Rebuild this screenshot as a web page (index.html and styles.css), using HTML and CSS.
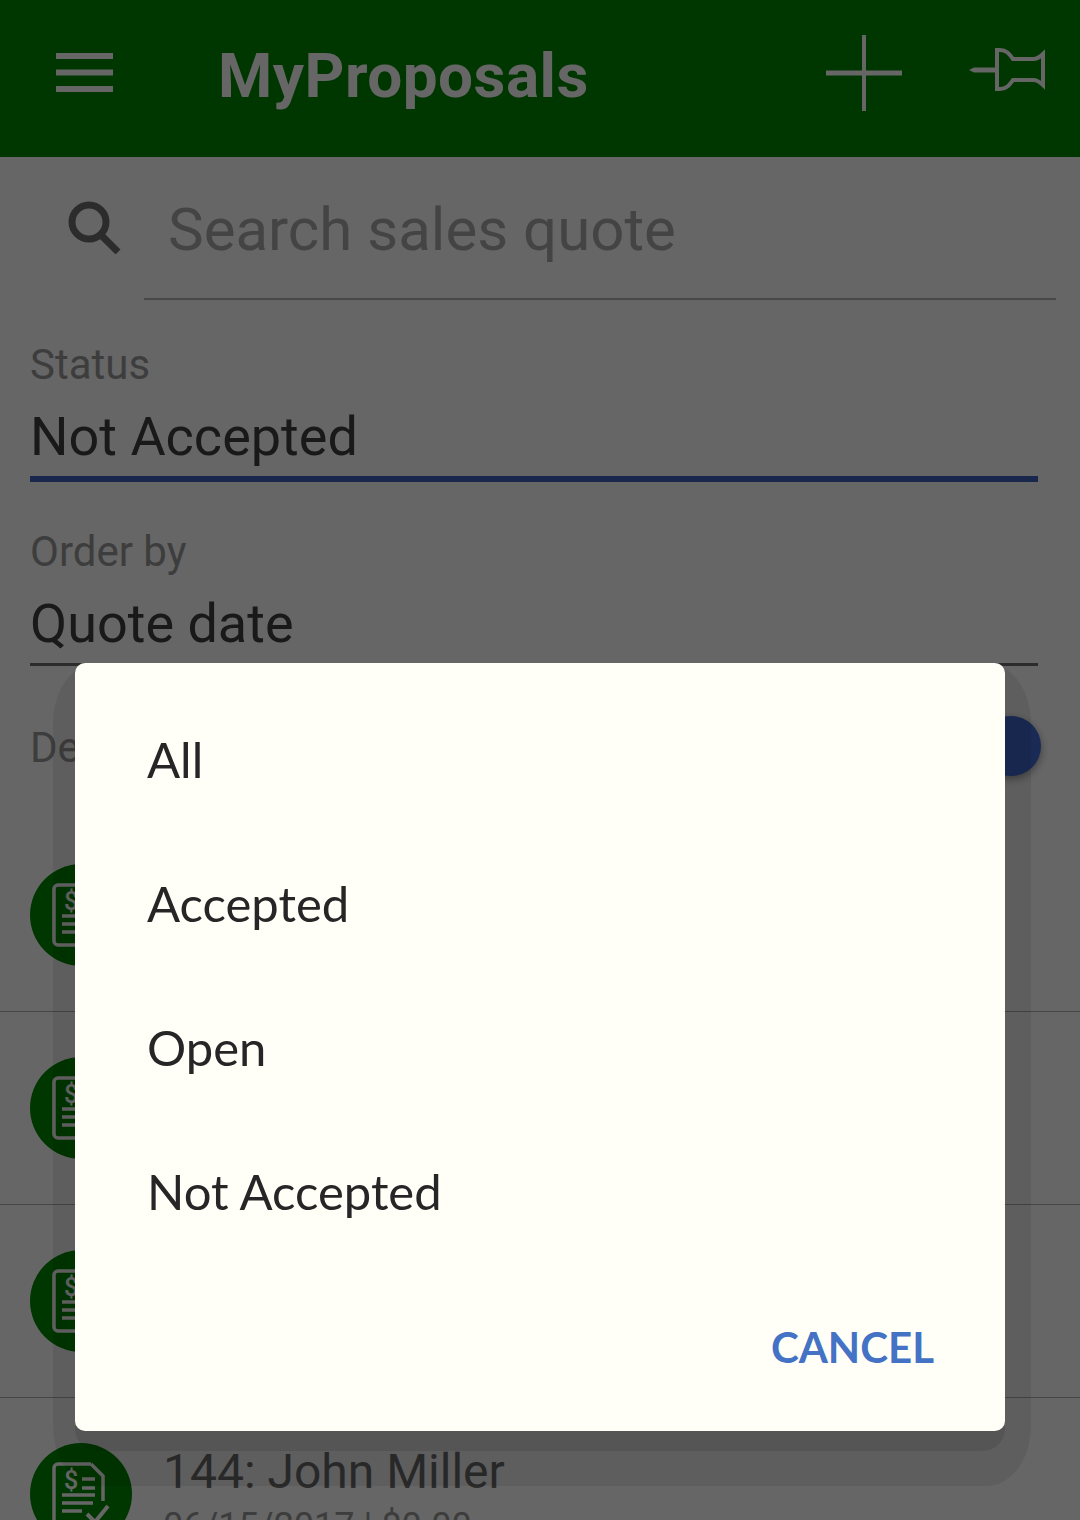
FILE: index.html
```html
<!DOCTYPE html>
<html lang="en">
<head>
    <meta charset="UTF-8">
    <meta name="viewport" content="width=device-width, initial-scale=1.0">
    <title>MyProposals</title>
    <link rel="stylesheet" href="styles.css">
</head>
<body>
    <header class="toolbar">
        <svg class="menu-icon" width="57" height="39" viewBox="0 0 57 39">
            <path d="M0 3h57M0 19.500h57M0 36h57"/>
        </svg>
        <h1 class="app-title">MyProposals</h1>
        <svg class="add-icon" width="76" height="76" viewBox="0 0 76 76">
            <path class="add-v" d="M38 0v76"/>
            <path class="add-h" d="M0 38h76"/>
        </svg>
        <svg class="pin-icon" width="78" height="46" viewBox="0 0 78 46">
            <path class="pin-head" d="M29 3h3c7 0 10 5 13 9h20c4 0 7-2 10-5v31c-3-3-6-5-10-5H45c-3 4-6 9-13 9h-3z"/>
            <path class="pin-shaft" d="M1 23l5-2.500h23v5H6z"/>
        </svg>
    </header>

    <div class="search-row">
        <svg class="search-icon" width="56" height="54" viewBox="0 0 56 54">
            <circle cx="24" cy="22" r="17"/>
            <path d="M36 35l17 17"/>
        </svg>
        <div class="search-box">Search sales quote</div>
    </div>

    <div class="form">
        <div class="field">
            <div class="field-label">Status</div>
            <div class="field-value">Not Accepted</div>
            <div class="field-line active"></div>
        </div>
        <div class="field">
            <div class="field-label">Order by</div>
            <div class="field-value">Quote date</div>
            <div class="field-line"></div>
        </div>
        <div class="toggle-row">
            <span class="field-label">De</span>
            <span class="toggle-knob"></span>
        </div>
    </div>

    <ul class="quotes">
        <li class="quote">
            <svg class="avatar" viewBox="0 0 102 102">
                <path class="doc-line" d="M61 21H28a4 4 0 0 0-4 4v52a4 4 0 0 0 4 4h26M61 21l12 12v25"/>
                <text class="doc-dollar" x="41" y="46">$</text>
                <path class="doc-line" d="M52 36h13M52 45h13M32 52h33M32 60h31M32 68h20"/>
                <path class="doc-check" d="M57 71l8 8 13-16"/>
            </svg>
        </li>
        <li class="quote">
            <svg class="avatar" viewBox="0 0 102 102">
                <path class="doc-line" d="M61 21H28a4 4 0 0 0-4 4v52a4 4 0 0 0 4 4h26M61 21l12 12v25"/>
                <text class="doc-dollar" x="41" y="46">$</text>
                <path class="doc-line" d="M52 36h13M52 45h13M32 52h33M32 60h31M32 68h20"/>
                <path class="doc-check" d="M57 71l8 8 13-16"/>
            </svg>
        </li>
        <li class="quote">
            <svg class="avatar" viewBox="0 0 102 102">
                <path class="doc-line" d="M61 21H28a4 4 0 0 0-4 4v52a4 4 0 0 0 4 4h26M61 21l12 12v25"/>
                <text class="doc-dollar" x="41" y="46">$</text>
                <path class="doc-line" d="M52 36h13M52 45h13M32 52h33M32 60h31M32 68h20"/>
                <path class="doc-check" d="M57 71l8 8 13-16"/>
            </svg>
        </li>
        <li class="quote">
            <svg class="avatar" viewBox="0 0 102 102">
                <path class="doc-line" d="M61 21H28a4 4 0 0 0-4 4v52a4 4 0 0 0 4 4h26M61 21l12 12v25"/>
                <text class="doc-dollar" x="41" y="46">$</text>
                <path class="doc-line" d="M52 36h13M52 45h13M32 52h33M32 60h31M32 68h20"/>
                <path class="doc-check" d="M57 71l8 8 13-16"/>
            </svg>
            <div class="quote-text">
                <div class="quote-name">144: John Miller</div>
                <div class="quote-meta">06/15/2017 | $0.00</div>
            </div>
        </li>
    </ul>

    <div class="overlay">
        <div class="dialog">
            <div class="option">All</div>
            <div class="option">Accepted</div>
            <div class="option">Open</div>
            <div class="option">Not Accepted</div>
            <div class="dialog-actions">
                <span class="cancel">CANCEL</span>
            </div>
        </div>
    </div>
</body>
</html>
```

FILE: styles.css
```css
html, body {
    height: 1520px;
    overflow: hidden;
}
body {
    margin: 0;
    background-color: #fff;
    font-family: Roboto, sans-serif;
    color: #404040;
}

/* toolbar */
.toolbar {
    display: flex;
    align-items: center;
    height: 157px;
    box-sizing: border-box;
    padding: 0 34px 12px 56px;
    background-color: #008900;
}
.menu-icon path {
    stroke: #fff;
    stroke-width: 6;
    fill: none;
}
.app-title {
    flex: 1;
    margin: 6px 0 0 105px;
    font-size: 62px;
    font-weight: 700;
    letter-spacing: 0.5px;
    color: #fff;
}
.add-icon {
    margin-right: 66px;
}
.add-icon path {
    stroke: #fff;
    fill: none;
}
.add-icon .add-v {
    stroke-width: 4;
}
.add-icon .add-h {
    stroke-width: 5;
}
.pin-icon {
    margin-bottom: 5px;
}
.pin-icon .pin-head {
    stroke: #fff;
    stroke-width: 4;
    fill: none;
}
.pin-icon .pin-shaft {
    fill: #fff;
}

/* search */
.search-row {
    display: flex;
    height: 143px;
    box-sizing: border-box;
    padding: 0 24px 0 65px;
}
.search-icon {
    margin-top: 43px;
    margin-right: 23px;
    flex-shrink: 0;
}
.search-icon circle,
.search-icon path {
    stroke: #6e6e6e;
    stroke-width: 7;
    fill: none;
}
.search-box {
    flex: 1;
    height: 143px;
    box-sizing: border-box;
    padding: 38px 0 0 24px;
    font-size: 60px;
    line-height: 70px;
    color: #ababab;
    border-bottom: 2px solid #b4b4b4;
}

/* filters */
.form {
    padding: 41px 42px 0 30px;
}
.field {
    margin-bottom: 46px;
}
.field-label {
    font-size: 42px;
    line-height: 48px;
    color: #9a9a9a;
}
.field-value {
    margin-top: 16px;
    font-size: 54px;
    line-height: 64px;
    color: #404040;
}
.field-line {
    height: 3px;
    margin-top: 7px;
    background-color: #6e6e6e;
}
.field-line.active {
    height: 6px;
    margin-top: 7px;
    background-color: #3f62c0;
}
.field:nth-child(2) {
    margin-bottom: 0;
}
.toggle-row {
    display: flex;
    justify-content: space-between;
    align-items: center;
    height: 153px;
    margin-right: -3px;
    padding-top: 10px;
    box-sizing: border-box;
}
.toggle-knob {
    width: 60px;
    height: 60px;
    margin-bottom: 4px;
    border-radius: 50%;
    background-color: #3f6ad4;
    box-shadow: 0 3px 8px rgba(0,0,0,0.4);
}

/* list */
.quotes {
    list-style: none;
    margin: 0;
    padding: 0;
}
.quote {
    display: flex;
    height: 193px;
    box-sizing: border-box;
    padding: 45px 0 0 30px;
    border-bottom: 1px solid #b0b0b0;
}
.avatar {
    width: 102px;
    height: 102px;
    flex-shrink: 0;
    border-radius: 50%;
    background-color: #008900;
}
.doc-line {
    stroke: #fff;
    stroke-width: 3.500;
    fill: none;
}
.doc-check {
    stroke: #fff;
    stroke-width: 4;
    fill: none;
}
.doc-dollar {
    font-family: Roboto, sans-serif;
    font-size: 25px;
    font-weight: 500;
    fill: #fff;
    text-anchor: middle;
}
.quote-text {
    margin-top: 1px;
    margin-left: 31px;
}
.quote-name {
    font-size: 48px;
    line-height: 56px;
    color: #6e6e6e;
}
.quote-meta {
    margin-top: 6px;
    font-size: 36px;
    line-height: 40px;
    color: #999;
}

/* dialog */
.overlay {
    position: fixed;
    top: 0;
    left: 0;
    width: 100%;
    height: 100%;
    background: rgba(0, 0, 0, 0.6);
}
.dialog {
    position: absolute;
    top: 663px;
    left: 75px;
    width: 930px;
    height: 768px;
    box-sizing: border-box;
    padding-top: 24px;
    background-color: #fffff8;
    border-radius: 10px;
}
.dialog::before {
    content: "";
    position: absolute;
    z-index: -1;
    top: 0;
    left: -22px;
    right: -26px;
    bottom: -55px;
    border-radius: 44px / 60px;
    background: rgba(0, 0, 0, 0.08);
}
.dialog::after {
    content: "";
    position: absolute;
    z-index: -1;
    left: 0;
    right: 0;
    bottom: -20px;
    height: 60px;
    border-radius: 0 0 22px 22px;
    background: rgba(0, 0, 0, 0.1);
}
.option {
    height: 144px;
    padding-left: 72px;
    font-family: Lato, sans-serif;
    font-size: 49px;
    line-height: 144px;
    color: #262626;
}
.dialog-actions {
    display: flex;
    justify-content: flex-end;
    padding: 59px 71px 0 0;
}
.cancel {
    font-family: Lato, sans-serif;
    font-size: 42px;
    font-weight: 700;
    line-height: 50px;
    color: #4472c4;
}
```
